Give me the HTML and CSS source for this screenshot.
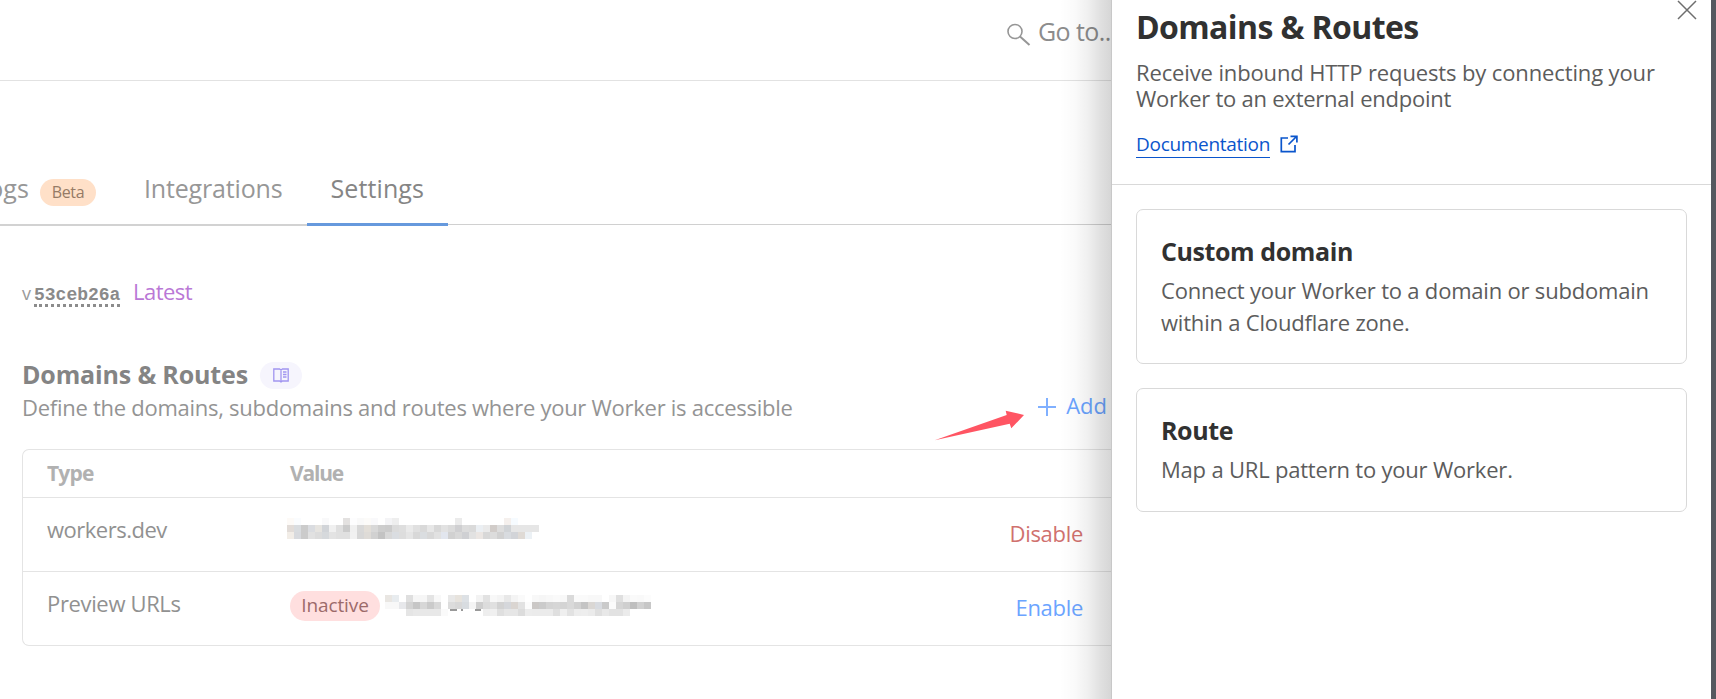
FILE: index.html
```
<!DOCTYPE html>
<html lang="en">
<head>
<meta charset="utf-8">
<title>Domains &amp; Routes</title>
<link rel="stylesheet" href="styles.css">
</head>
<body>
<div class="app">
  <main class="main">
    <header class="topbar">
      <svg class="search-icon" width="24" height="24" viewBox="0 0 24 24" fill="none" stroke="#969696" stroke-width="1.6"><circle cx="8" cy="8.5" r="7"/><path d="M13 13.5 22.5 22" stroke-width="2"/></svg>
      <span class="search-text">Go to...</span>
    </header>
    <nav class="tabs">
      <div class="tab tab-logs"><span class="logs-label">Logs</span><span class="beta">Beta</span></div>
      <div class="tab tab-int">Integrations</div>
      <div class="tab tab-active">Settings</div>
      <div class="tab-rest"></div>
    </nav>
    <div class="version"><span class="v">v</span><span class="hash">53ceb26a</span><span class="latest">Latest</span></div>
    <section class="section-head">
      <div>
        <div class="title-row">
          <h2>Domains &amp; Routes</h2>
          <span class="docs-pill"><svg width="16" height="15" viewBox="0 0 16 15" fill="none" stroke="#a195f0" stroke-width="1.3"><path d="M.8 1H6.500L8 2 9.500 1H15.200V13H9.500L8 14 6.500 13H.8ZM8 2V14M10 4h3.500M10 6.500h3.500M10 9h3.500"/></svg></span>
        </div>
        <p class="section-desc">Define the domains, subdomains and routes where your Worker is accessible</p>
      </div>
      <div class="add"><svg width="18" height="18" viewBox="0 0 18 18" stroke="#80b0ff" stroke-width="2"><path d="M9 0V18M0 9H18"/></svg><span>Add</span></div>
    </section>
    <div class="table">
      <div class="row row-head"><span class="c1">Type</span><span class="c2">Value</span></div>
      <div class="row"><span class="c1 dev">workers.dev</span><span class="c2"><svg class="mosaic" id="m1" width="252" height="21"></svg></span><span class="action danger">Disable</span></div>
      <div class="row"><span class="c1 preview">Preview URLs</span><span class="c2"><span class="inactive">Inactive</span><svg class="mosaic2" id="m2" width="273" height="21"></svg></span><span class="action link">Enable</span></div>
    </div>
    <div class="shade"></div>
    <svg class="arrow" width="92" height="32" viewBox="0 0 92 32"><path fill="#ff5563" d="M.7 30.300 72.700 5 71.700.7 90 5 77.300 18.300 75.700 13.700Z"/></svg>
  </main>
  <aside class="panel">
    <div class="panel-head">
      <h1>Domains &amp; Routes</h1>
      <p>Receive inbound HTTP requests by connecting your<br><span class="tight">Worker to an external endpoint</span></p>
      <div class="doc"><a>Documentation</a><svg width="18" height="18" viewBox="0 0 18 18" fill="none" stroke="#0a55cc" stroke-width="1.7"><path d="M8 3H1.300V16.700H15V10M8.500 9.500 16 2M10.500 1.300H16.900V7.500"/></svg></div>
      <svg class="close" width="20" height="20" viewBox="0 0 20 20" stroke="#6e6e6e" stroke-width="1.5"><path d="M1 1 19 19M19 1 1 19"/></svg>
    </div>
    <div class="cards">
      <div class="card"><h3 class="custom">Custom domain</h3><p>Connect your Worker to a domain or subdomain<br>within a Cloudflare zone.</p></div>
      <div class="card"><h3 class="route">Route</h3><p>Map a URL pattern to your Worker.</p></div>
    </div>
  </aside>
  <div class="edge"></div>
</div>
<script src="mosaic.js"></script>
</body>
</html>
```
FILE: styles.css
```
* { box-sizing: border-box; }
body { margin: 0; overflow: hidden; font-family: "Open Sans", "Noto Sans", sans-serif; font-size: 22px; line-height: 32px; background: #fff; }
h1, h2, h3, p { margin: 0; }
svg { display: block; flex: none; }
.app { display: flex; width: 1716px; height: 699px; }
.main { position: relative; flex: 0 0 1111px; overflow: hidden; white-space: nowrap; }

.topbar { display: flex; height: 81px; padding: 15px 0 0 1007px; border-bottom: 1px solid #e2e2e2; }
.search-icon { margin-top: 8px; }
.search-text { margin-left: 7px; font-size: 25px; letter-spacing: -0.6px; color: #8c8c8c; }

.tabs { display: flex; height: 145px; align-items: stretch; font-size: 25px; color: #979797; }
.tab { padding-top: 91px; border-bottom: 2px solid #d2d2d2; }
.tab-logs { display: flex; width: 120px; }
.logs-label { display: flex; justify-content: flex-end; width: 29px; letter-spacing: 0.1px; }
.beta { width: 56px; height: 27px; margin: 7px 0 0 11px; border-radius: 14px; background: #ffe0c8; color: #967b66; font-size: 16px; line-height: 27px; text-align: center; letter-spacing: -0.3px; }
.tab-int { width: 187px; padding-left: 24px; letter-spacing: -0.16px; }
.tab-active { width: 141px; padding-left: 23.5px; border-bottom: 3px solid #6699dd; color: #858585; letter-spacing: 0.1px; }
.tab-rest { flex: 1; height: 144px; border-bottom: 1px solid #d0d0d0; }

.version { display: flex; margin: 49px 0 0 22px; height: 32px; }
.v { font-size: 18px; line-height: 36px; color: #999; }
.hash { height: 23px; margin: 9px 0 0 3px; border-bottom: 3px dotted #8c8c8c; font: bold 18px/22px "Liberation Mono", monospace; color: #8a8a8a; }
.latest { margin-left: 12.5px; color: #ba78d6; letter-spacing: -0.5px; }

.section-head { display: flex; justify-content: space-between; padding: 51px 4px 0 22px; color: #8c8c8c; }
.title-row { display: flex; height: 33px; }
h2 { font-size: 25px; line-height: 33px; letter-spacing: -0.15px; color: #848484; }
.docs-pill { display: flex; align-items: center; justify-content: center; width: 42px; height: 27px; margin: 4px 0 0 12px; border-radius: 14px; background: #f6f5fd; }
.section-desc { color: #949494; letter-spacing: -0.27px; }
.add { display: flex; gap: 10px; padding-top: 31px; color: #6ba4ff; }
.add svg { margin-top: 9px; }

.table { width: 1120px; margin: 26px 0 0 22px; border: 1px solid #e4e4e4; border-right: 0; border-radius: 7px 0 0 7px; }
.row { display: flex; height: 74px; padding: 15px 0 0 24px; border-bottom: 1px solid #e4e4e4; color: #919191; }
.row:last-child { height: 73px; border-bottom: 0; }
.row-head { height: 48px; padding-top: 7px; font-size: 21px; font-weight: 700; color: #b1b1b1; }
.c1 { width: 243px; }
.dev { letter-spacing: -0.5px; }
.preview { letter-spacing: -0.35px; }
.row-head .c1 { letter-spacing: -0.8px; }
.row-head .c2 { letter-spacing: -1.2px; }
.c2 { display: flex; width: 570px; }
.action { width: 223px; padding-top: 4px; text-align: right; letter-spacing: -0.3px; }
.danger { color: #d0716e; }
.link { color: #6ba4ff; }
.inactive { width: 90px; height: 30px; margin-top: 4px; border-radius: 15px; background: #ffdfdf; color: #9c6a6a; font-size: 19px; line-height: 29px; text-align: center; letter-spacing: -0.1px; }
.mosaic { margin: 5px 0 0 -3px; }
.mosaic2 { margin: 8px 0 0 5px; }

.shade { position: absolute; top: 0; right: 0; bottom: 0; width: 52px; background: linear-gradient(90deg, rgba(0,0,0,0), rgba(0,0,0,.02) 30%, rgba(0,0,0,.06) 55%, rgba(0,0,0,.12) 80%, rgba(0,0,0,.16)); }
.arrow { position: absolute; left: 934px; top: 410px; }

.panel { position: relative; flex: 0 0 600px; border-left: 1px solid #c8c8c8; background: #fff; }
.panel-head { height: 185px; padding: 7px 0 0 24px; border-bottom: 1px solid #d9d9d9; }
h1 { font-size: 32px; line-height: 40px; letter-spacing: -0.6px; color: #313131; }
.panel p { color: #5c5c5c; letter-spacing: -0.2px; }
.panel .panel-head p { margin-top: 12px; line-height: 26px; letter-spacing: -0.13px; }
.tight { letter-spacing: -0.24px; }
.doc { display: flex; margin-top: 20px; }
.doc a { height: 27px; border-bottom: 1px solid #0a55cc; color: #0a55cc; font-size: 19px; line-height: 26px; letter-spacing: -0.29px; }
.doc svg { margin: 4px 0 0 10px; }
.close { position: absolute; right: 14px; top: 0; }
.cards { display: flex; flex-direction: column; gap: 24px; padding: 24px; }
.card { height: 155px; padding: 25px 0 0 24px; border: 1px solid #d9d9d9; border-radius: 7px; white-space: nowrap; }
.card:last-child { height: 124px; }
.card h3 { font-size: 25px; line-height: 33px; color: #313131; letter-spacing: -0.4px; }
.card p { margin-top: 6px; }
.edge { flex: 1; background: #55585f; }
```
FILE: mosaic.js
```
// Pixelated redaction: each token is a grey level or full hex, "-" leaves a cell empty.
const m1 = [
  "fdfaf7 fafcfe - - - f9f9fa - - e3e1e0 fdfdfe f9f9f9 fcfbf9 f9f9fb - f4f4f6 ee - - - - - - - - eb - - - - - - f5f0ed f6fbff - - -",
  "e2dcd8 d9dcdf cb dadce0 e6e4e0 d1d4d8 f0 df cb f0 d8 e2ded8 d8 cd cb db de ea e0 d9 e7 d8 e2 db cfcfd1 dc da ebeff3 ea d1ccc9 dd d0d3d6 e6 e6 e6 e6",
  "f2ede7 d8dade cb e1 dc d6d9dc e3 e0 e0 f1 d7 dedbd7 d1 c3 d8 dadde1 dd e5 d8 dadde0 d8 e1 e2e6ee d1 d8 cfd0d3 e2 ebe6e3 d8 dc d1 d8dbdf d2d4d8 dfdad5 ecf1f5 -"
];
const m2 = [
  "e9e6e2 e8ecef - df f6 f6 e4 f8 - e8 e7e3dd dde1e5 - f3 e2 f8 f4 e8 f4 fa - f8 f6 f8 fa f8 da fa fa f8 f8 - f7 df f4 fa f9 fc -",
  "f8 f8 e7e8eb d3 c6 d7 ca d8 - dc d8 d8dce0 f4 ce dc e0 d2 d5d7db dad5d1 e2 fc cbc8c6 cb d4 d6 d4 d9 d1 c4 dad7d4 d8dbe0 ca fb d5 cf bf d1 c7 -",
  "- - - e5 e8 e8 e8 e8 fa - - - - - ee f0 df e6 e6 dc ec eb eb eb df ef e2 ed ee eb df e8 e2 e2 eb - - - -"
];
function rect(svg, x, y, w, h, fill) {
  const r = document.createElementNS("http://www.w3.org/2000/svg", "rect");
  Object.entries({ x, y, width: w, height: h, fill }).forEach(([k, v]) => r.setAttribute(k, v));
  svg.appendChild(r);
}
function draw(id, rows) {
  const svg = document.getElementById(id);
  rows.forEach((row, y) => row.split(" ").forEach((t, x) => {
    if (t !== "-") rect(svg, x * 7, y * 7, 7, 7, "#" + (t.length === 2 ? t + t + t : t));
  }));
  return svg;
}
draw("m1", m1);
const second = draw("m2", m2);
// Lower edges of letters left uncovered below the blocks.
rect(second, 65, 14, 7, 2, "#999");
rect(second, 76, 14, 2, 2, "#999");
rect(second, 90, 14, 6, 2, "#999");
```
